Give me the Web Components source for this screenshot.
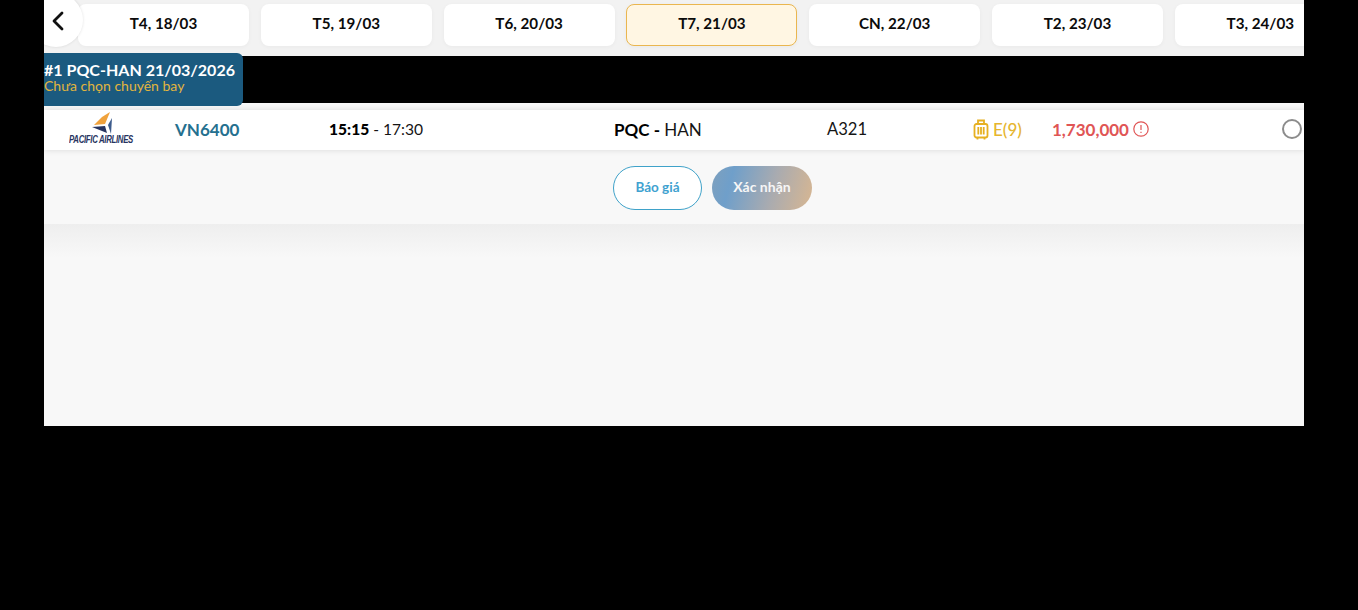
<!DOCTYPE html>
<html>
<head>
<meta charset="utf-8">
<title>Chọn chuyến bay</title>
<style>
    html, body { margin: 0; height: 100%; background: #000; overflow: hidden; }
    body { font-family: Lato, "Open Sans", sans-serif; }
</style>
</head>
<body>
<booking-app>
    <date-strip>
        <date-tab>T4, 18/03</date-tab>
        <date-tab>T5, 19/03</date-tab>
        <date-tab>T6, 20/03</date-tab>
        <date-tab active>T7, 21/03</date-tab>
        <date-tab>CN, 22/03</date-tab>
        <date-tab>T2, 23/03</date-tab>
        <date-tab>T3, 24/03</date-tab>
    </date-strip>
    <leg-tab title-text="#1 PQC-HAN 21/03/2026" sub-text="Chưa chọn chuyến bay"></leg-tab>
    <flight-panel>
        <flight-row></flight-row>
        <action-bar></action-bar>
    </flight-panel>
</booking-app>

<script>
class BookingApp extends HTMLElement {
    constructor() {
        super();
        this.shadow = this.attachShadow({mode:"open"});
    }
    connectedCallback(){
        this.shadow.innerHTML = `
        <style>
            :host { display: block; width: 1260px; margin-left: 44px; }
        </style>
        <slot></slot>`;
    }
}

class DateStrip extends HTMLElement {
    constructor() {
        super();
        this.shadow = this.attachShadow({mode:"open"});
    }
    connectedCallback(){
        this.shadow.innerHTML = `
        <style>
            :host {
                display: block;
                position: relative;
                height: 56px;
                overflow: hidden;
                background: #f2f2f2;
            }
            .back {
                position: absolute;
                left: -15px;
                top: -7px;
                width: 54px;
                height: 54px;
                border-radius: 50%;
                background: #fff;
                box-shadow: 0 0 3px rgba(0,0,0,.12);
                z-index: 1;
            }
            .back svg { position: absolute; left: 22px; top: 17px; }
            .list {
                display: flex;
                gap: 11.8px;
                padding: 4px 0 0 34px;
                width: 1400px;
            }
        </style>
        <div class="back">
            <svg width="14" height="22" viewBox="0 0 14 22" fill="none" stroke="#111" stroke-width="2.8" stroke-linecap="round" stroke-linejoin="round"><path d="M11 3 L3 11 L11 19"/></svg>
        </div>
        <div class="list"><slot></slot></div>`;
    }
}

class DateTab extends HTMLElement {
    constructor() {
        super();
        this.shadow = this.attachShadow({mode:"open"});
    }
    connectedCallback(){
        this.shadow.innerHTML = `
        <style>
            :host {
                display: flex;
                flex: none;
                box-sizing: border-box;
                width: 171px;
                height: 42px;
                padding-bottom: 5px;
                align-items: center;
                justify-content: center;
                background: #fff;
                border-radius: 8px;
                font-size: 15.2px;
                font-weight: 700;
                color: #0b0b0b;
                box-shadow: 0 1px 4px rgba(0,0,0,.04);
            }
            :host([active]) {
                background: #fff6e3;
                border: 1px solid #eab64f;
                padding-bottom: 4px;
            }
        </style>
        <slot></slot>`;
    }
}

class LegTab extends HTMLElement {
    constructor() {
        super();
        this.shadow = this.attachShadow({mode:"open"});
    }
    connectedCallback(){
        this.shadow.innerHTML = `
        <style>
            :host {
                display: block;
                position: relative;
                z-index: 2;
                box-sizing: border-box;
                width: 199px;
                height: 53px;
                margin: -3px 0 -3px;
                padding-top: 8px;
                background: #1b5a7f;
                border-radius: 0 6px 6px 0;
            }
            .title { font-size: 16.05px; font-weight: 700; color: #fff; line-height: 17px; }
            .sub { font-size: 14px; color: #e2b53e; line-height: 15px; }
        </style>
        <div class="title">${this.getAttribute("title-text")}</div>
        <div class="sub">${this.getAttribute("sub-text")}</div>`;
    }
}

class FlightPanel extends HTMLElement {
    constructor() {
        super();
        this.shadow = this.attachShadow({mode:"open"});
    }
    connectedCallback(){
        this.shadow.innerHTML = `
        <style>
            :host {
                display: block;
                box-sizing: border-box;
                height: 323px;
                padding-top: 7px;
                background: linear-gradient(#f8f8f8 121px, #eeeeee 121px, #f8f8f8 155px);
            }
        </style>
        <slot></slot>`;
    }
}

class FlightRow extends HTMLElement {
    constructor() {
        super();
        this.shadow = this.attachShadow({mode:"open"});
    }
    connectedCallback(){
        this.shadow.innerHTML = `
        <style>
            :host {
                display: grid;
                grid-template-columns: 131px 154px 285px 213px 146px 79px 1fr 30px;
                grid-template-rows: 38px;
                align-items: center;
                box-sizing: border-box;
                height: 40px;
                padding-bottom: 2px;
                background: #fff;
                box-shadow: 0 0 6px rgba(0,0,0,.13);
                font-size: 16px;
                color: #151515;
                position: relative;
                z-index: 1;
            }
            .logo { display: flex; flex-direction: column; align-items: center; align-self: start; padding-right: 17px; width: 114px; }
            .logo svg { display: block; margin-top: 1px; }
            .logo span {
                font: italic 700 10px/10px "Liberation Sans", sans-serif;
                letter-spacing: -.4px;
                color: #27345f;
                white-space: nowrap;
                transform: scaleX(.78);
            }
            .code { font-size: 17px; font-weight: 700; color: #25708f; }
            .time { font-size: 15.6px; }
            b { font-weight: 900; color: #000; }
            .route { font-size: 17px; }
            .route b { font-weight: 700; }
            .aircraft { font-size: 16.6px; }
            .seat { display: flex; align-items: center; gap: 4px; color: #e6b52e; font-size: 17px; font-weight: 500; }
            .price { display: flex; align-items: center; gap: 4px; color: #e05555; font-size: 17px; font-weight: 700; }
            .radio {
                justify-self: end;
                margin-right: 2px;
                box-sizing: border-box;
                width: 20px;
                height: 20px;
                border: 2px solid #8c8c8c;
                border-radius: 50%;
                background: #fff;
            }
        </style>
        <div class="logo">
            <svg width="24" height="24" viewBox="0 0 24 24">
                <polygon points="21,1 16,13 5,14 13,6" fill="#f0a23c"/>
                <polygon points="3,16 16,15 18,22" fill="#27345f"/>
                <polygon points="23,7 19,14 22,23" fill="#3d5c8c"/>
            </svg>
            <span>PACIFIC AIRLINES</span>
        </div>
        <div class="code">VN6400</div>
        <div class="time"><b>15:15</b> - 17:30</div>
        <div class="route"><b>PQC -</b> HAN</div>
        <div class="aircraft">A321</div>
        <div class="seat">
            <svg width="16" height="21" viewBox="0 0 16 21" fill="none" stroke="#e6b020" stroke-width="1.8"><path d="M5 5V1.5h6V5"/><rect x="1.5" y="5" width="13" height="13.5" rx="2"/><path d="M5.3 8v7.5M8 8v7.5M10.7 8v7.5M4.5 18.5V20.5M11.5 18.5V20.5"/></svg>
            <span>E(9)</span>
        </div>
        <div class="price">
            <span>1,730,000</span>
            <svg width="16" height="16" viewBox="0 0 16 16" fill="none" stroke="#e05555" stroke-width="1.2"><circle cx="8" cy="8" r="7.2"/><path d="M8 4v5M8 10.8v1.2"/></svg>
        </div>
        <div class="radio"></div>`;
    }
}

class ActionBar extends HTMLElement {
    constructor() {
        super();
        this.shadow = this.attachShadow({mode:"open"});
    }
    connectedCallback(){
        this.shadow.innerHTML = `
        <style>
            :host {
                display: flex;
                justify-content: center;
                gap: 10px;
                box-sizing: border-box;
                height: 74px;
                padding: 16px 0 0 77px;
                background: #f8f8f8;
                font-size: 13.5px;
                font-weight: 700;
            }
            button {
                font: inherit;
                height: 44px;
                border-radius: 22px;
                padding: 0 0 3px;
            }
            .quote { width: 89px; background: #fff; border: 1px solid #3fa2c9; color: #3fa2d0; }
            .ok {
                width: 100px;
                border: 0;
                color: #f6f6f6;
                font-size: 14px;
                background: linear-gradient(105deg, #7fa0bd 0%, #6f9fca 20%, #a9abb0 60%, #d2b595 95%);
            }
        </style>
        <button class="quote">Báo giá</button>
        <button class="ok">Xác nhận</button>`;
    }
}

customElements.define("booking-app", BookingApp);
customElements.define("date-strip", DateStrip);
customElements.define("date-tab", DateTab);
customElements.define("leg-tab", LegTab);
customElements.define("flight-panel", FlightPanel);
customElements.define("flight-row", FlightRow);
customElements.define("action-bar", ActionBar);
</script>
</body>
</html>
